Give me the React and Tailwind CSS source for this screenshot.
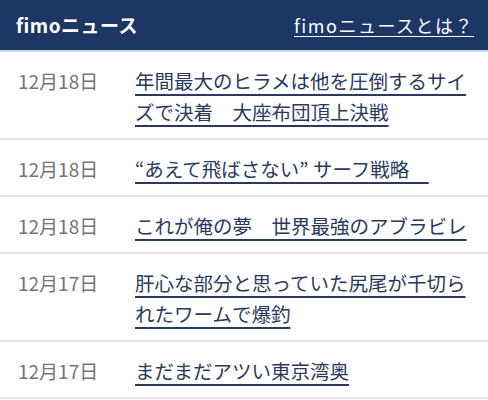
import React from 'react';

const news = [
  { date: '12月18日', lines: ['年間最大のヒラメは他を圧倒するサイ', 'ズで決着　大座布団頂上決戦'] },
  { date: '12月18日', lines: ['“あえて飛ばさない” サーフ戦略　'] },
  { date: '12月18日', lines: ['これが俺の夢　世界最強のアブラビレ'] },
  { date: '12月17日', lines: ['肝心な部分と思っていた尻尾が千切ら', 'れたワームで爆釣'] },
  { date: '12月17日', lines: ['まだまだアツい東京湾奥'] },
];

export default function App() {
  return (
    <div
      className="w-[488px] h-[400px] overflow-hidden bg-white"
      style={{ fontFamily: '"Noto Sans CJK JP", "Noto Sans", sans-serif' }}
    >
      {/* Header */}
      <div className="h-[52px] bg-[#1c3766] border-b-2 border-[#c9d6ea] flex items-center justify-between pl-4 pr-[14px]">
        <div className="text-white font-bold text-[19px] tracking-[0.5px]">fimoニュース</div>
        <a href="#" className="text-white text-[18px] underline underline-offset-[3px] decoration-1 tracking-[1.5px]">
          fimoニュースとは？
        </a>
      </div>

      {/* List */}
      <ul>
        {news.map((n, i) => (
          <li key={i} className="flex border-b-2 border-[#e6e6e6] pl-[18px] pr-4 pt-[13px] pb-[11px]">
            <div className="w-[117px] shrink-0 text-[#747474] text-[19px] leading-[31px]">{n.date}</div>
            <a
              href="#"
              className="flex-1 text-[#2a3a5e] text-[19.5px] leading-[31px] underline underline-offset-[5px] decoration-[1.5px] decoration-[#2a3a5e] whitespace-nowrap"
            >
              {n.lines.map((l, j) => (
                <React.Fragment key={j}>
                  {j > 0 && <br />}
                  {l}
                </React.Fragment>
              ))}
            </a>
          </li>
        ))}
      </ul>
    </div>
  );
}
